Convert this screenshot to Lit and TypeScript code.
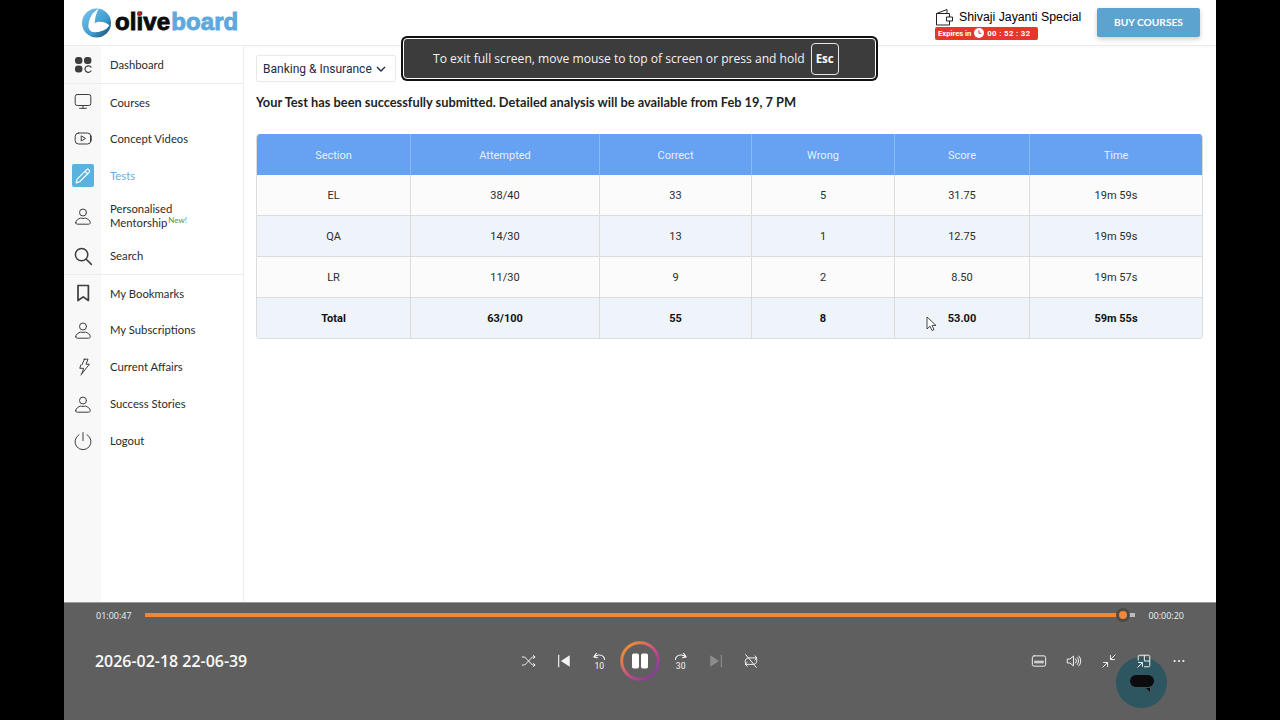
import { LitElement, html, css, svg } from "lit";
import { customElement } from "lit/decorators.js";

const S = (c: unknown, box = "0 0 22 22") =>
  html`<svg viewBox=${box} fill="none" stroke="currentColor" stroke-width="1" stroke-linecap="round" stroke-linejoin="round">${c}</svg>`;

const person = svg`<circle cx="11" cy="7.500" r="3.500"/><path d="M3.700 17.800c0-2.600 2.700-4 5-4.800 1.400.6 3.200.6 4.600 0 2.300.8 5 2.200 5 4.800 0 .9-.9 1.400-1.800 1.400H5.500c-.9 0-1.800-.5-1.800-1.400z"/>`;

const sideIcons: Record<string, unknown> = {
  dash: S(svg`<rect x="3" y="3" width="7.400" height="7" rx="3" fill="currentColor" stroke="none"/><rect x="12" y="3" width="7.400" height="7" rx="3" fill="currentColor" stroke="none"/><rect x="3" y="11.600" width="7.400" height="7" rx="3" fill="currentColor" stroke="none"/><path d="M19 13.200a3.300 3.300 0 1 0 0 3.800" stroke-width="1.200"/>`),
  courses: S(svg`<rect x="3.200" y="3.500" width="15.600" height="11" rx="2"/><path d="M11 14.500v2.600M7.500 17.300h7"/>`),
  video: S(svg`<rect x="3.200" y="5" width="15.600" height="11" rx="3.400"/><path d="M9.200 8.200v4.800l4-2.400z"/><path d="M18.800 8v5" stroke-width="1.600"/>`),
  pen: S(svg`<path d="M4.500 14.500 14.800 4.200c.8-.8 2-.8 2.800 0s.8 2 0 2.800L7.300 17.300l-3.800 1.200zM13.200 5.800l3 3" stroke-width="1.300"/>`),
  person: S(person),
  search: S(svg`<circle cx="9.600" cy="9.600" r="6.200" stroke-width="1.500"/><path d="m14.200 14.200 5.200 5.200" stroke-width="1.500"/>`),
  bookmark: S(svg`<path d="M6 3.500h10.400v15l-5.200-3.600L6 18.500z" stroke-width="1.700"/>`),
  bolt: S(svg`<path d="M11.800 3.200h4.200l-2 5h3.400L10 17.500l1.600-5.200H7.800l1-3.300"/><path d="m12.500 3.200-2.600 5.600M9 19l1-2"/>`),
  power: S(svg`<path d="M7 4.700a8 8 0 1 0 8 0"/><path d="M11 2.600v8"/>`),
};

const rows: [string, string, number][] = [
  ["dash", "Dashboard", 38],
  ["courses", "Courses", 36],
  ["video", "Concept Videos", 37],
  ["pen", "Tests", 37],
  ["person", "Personalised", 43],
  ["search", "Search", 38],
  ["bookmark", "My Bookmarks", 36],
  ["person", "My Subscriptions", 37],
  ["bolt", "Current Affairs", 37],
  ["person", "Success Stories", 37],
  ["power", "Logout", 37],
];

const head = ["Section", "Attempted", "Correct", "Wrong", "Score", "Time"];
const data = [
  ["EL", "38/40", "33", "5", "31.75", "19m 59s"],
  ["QA", "14/30", "13", "1", "12.75", "19m 59s"],
  ["LR", "11/30", "9", "2", "8.50", "19m 57s"],
  ["Total", "63/100", "55", "8", "53.00", "59m 55s"],
];

const P = (c: unknown, w = 16) =>
  html`<svg width=${w} height=${w} viewBox="0 0 18 18" fill="none" stroke="currentColor" stroke-width="1.100" stroke-linecap="round" stroke-linejoin="round">${c}</svg>`;

const ctl = {
  shuffle: P(svg`<path d="M1.500 4.500h2.600l8.800 9h2.600M1.500 13.500h2.600l8.800-9h2.600M14 2.800l1.800 1.700L14 6.200M14 11.800l1.800 1.700-1.800 1.700"/>`),
  prev: P(svg`<path d="M3 2.500v13" stroke-width="1.300"/><path d="M15.500 2.500v13L5.500 9z" fill="currentColor" stroke="none"/>`),
  back: P(svg`<path d="M4.200 5.400C6 2.600 11 2.200 13.400 4.600c.7.700 1 1.600 1.100 2.800M6.400 1.400 3.900 4.900l3.500.9"/><text x="9.300" y="16.800" text-anchor="middle" font-family="Roboto,sans-serif" font-size="8.600" fill="currentColor" stroke="none">10</text>`, 18),
  fwd: P(svg`<path d="M13.800 5.400C12 2.600 7 2.200 4.600 4.600c-.7.700-1 1.600-1.100 2.800M11.600 1.400l2.500 3.500-3.500.9"/><text x="8.700" y="16.800" text-anchor="middle" font-family="Roboto,sans-serif" font-size="8.600" fill="currentColor" stroke="none">30</text>`, 18),
  next: P(svg`<path d="M15 2.500v13" stroke-width="1.300" stroke="#8d8d8d"/><path d="M2.500 2.500v13L12.500 9z" fill="#8d8d8d" stroke="none"/>`),
  repeat: P(svg`<path d="M3.300 12.500a5 5 0 0 1-.8-3c0-2.300 1.700-4 4-4h8.600M13.400 3.200 15.800 5.500l-2.400 2.300M14.800 5.800a5 5 0 0 1 .7 3c0 2.300-1.700 4-4 4H2.800M4.800 15 2.400 12.700l2.400-2.300M3 1.800 15 16.200"/>`),
  caption: P(svg`<rect x="1.500" y="3.200" width="15" height="11.600" rx="2"/><path d="M4 11h10M4 9.200h10" stroke-width="1.200"/>`),
  volume: P(svg`<path d="M1.800 6.800h2.600l4-3.300v11l-4-3.300H1.800zM10.800 6.600a3.400 3.400 0 0 1 0 4.800M12.600 5a5.600 5.600 0 0 1 0 8M14.400 3.400a7.800 7.800 0 0 1 0 11.200"/>`),
  compress: P(svg`<path d="M2 16l5.400-5.400M2.800 10.600h4.600v4.600M16 2l-5.400 5.400M15.200 7.400h-4.600V2.800"/>`),
  pip: P(svg`<path d="M2.500 8V3.800c0-.8.500-1.300 1.300-1.300h10.400c.8 0 1.300.5 1.300 1.300v10.400c0 .8-.5 1.300-1.300 1.300H9.500M9.400 2.800v6.200h6"/><path d="M2 16l5-5M2.800 10.600h4.400V15"/>`),
  more: html`<svg width="18" height="18" viewBox="0 0 18 18" fill="currentColor"><circle cx="4.600" cy="9" r="1.100"/><circle cx="9" cy="9" r="1.100"/><circle cx="13.400" cy="9" r="1.100"/></svg>`,
};

@customElement("app-root")
export class AppRoot extends LitElement {
  static styles = css`
    :host { display: block; width: 1280px; height: 720px; background: #000; overflow: hidden; }
    * { box-sizing: border-box; }
    .stage { position: relative; width: 1152px; height: 720px; margin: 0 auto; background: #fff; display: flex; flex-direction: column; overflow: hidden; font-family: "Lato", sans-serif; color: #222; }

    header { height: 46px; flex: none; display: flex; align-items: center; border-bottom: 1px solid #ececec; box-shadow: 0 1px 2px rgba(0,0,0,.04); padding: 0 0 1px 17px; }
    .logo { display: flex; align-items: center; gap: 3px; position: relative; }
    .logo svg { width: 31px; height: 31px; display: block; }
    .word { font: 700 24px "Liberation Sans", sans-serif; letter-spacing: .1px; -webkit-text-stroke: .9px currentColor; color: #0c0c0c; line-height: 30px; white-space: nowrap; }
    .word b { font-weight: 700; color: #5da9dd; margin-left: 1px; }
    .reddot { position: absolute; left: 56px; top: 5px; width: 4.500px; height: 4.500px; border-radius: 50%; background: #b0202b; }
    .offer { margin-left: auto; margin-top: 3px; width: 146px; display: flex; flex-direction: column; }
    .offer-top { display: flex; align-items: center; gap: 5px; height: 19px; }
    .offer-top svg { width: 19px; height: 19px; display: block; color: #222; flex: none; }
    .offer-name { font: 400 12.300px "Liberation Sans", sans-serif; color: #000; white-space: nowrap; }
    .badge { width: 103px; height: 13px; border-radius: 2px; background: #e5372c; color: #fff; display: flex; align-items: center; padding-left: 3px; font: 700 7.600px "Roboto", sans-serif; white-space: nowrap; }
    .badge svg { width: 10px; height: 10px; margin: 0 3px 0 3px; flex: none; }
    .badge span { font-size: 7.800px; letter-spacing: .35px; }
    .buy { margin: 0 16px; width: 103px; height: 29px; border-radius: 2px; background: #5da3cf; color: #fff; font: 700 10.200px "Lato", sans-serif; display: flex; align-items: center; justify-content: center; box-shadow: 0 2px 5px rgba(0,0,0,.2); }

    .body { flex: 1; display: flex; min-height: 0; }
    nav { width: 180px; flex: none; border-right: 1px solid #efefef; background: linear-gradient(90deg, #f8f8f8 37px, #fff 37px); }
    .item { display: flex; align-items: center; font-size: 11.300px; color: #2b2b2b; }
    .item.line { border-bottom: 1px solid #ececec; }
    .ic { width: 37px; height: 23px; flex: none; display: flex; align-items: center; justify-content: center; color: #3d3d3d; margin-right: 9px; }
    .ic svg { width: 22px; height: 22px; display: block; }
    .item.active { color: #62b0d8; }
    .item.active .ic { color: #fff; }
    .pill { width: 22px; height: 23px; margin-left: 1px; border-radius: 2px; background: #5cb2de; display: flex; align-items: center; justify-content: center; }
    .pill svg { width: 20px; height: 20px; }
    .two { line-height: 14px; }
    sup { font-size: 8px; color: #4c9a4c; line-height: 0; vertical-align: 4px; margin-left: 1px; }

    main { flex: 1; padding: 9px 13px 0 12px; min-width: 0; }
    .select { width: 140px; height: 27px; border: 1px solid #e9e9e9; border-radius: 2px; display: flex; align-items: center; padding-left: 6px; gap: 3px; font: 400 12px "Roboto", sans-serif; color: #1c2a4a; }
    .select svg { width: 12px; height: 12px; }
    .msg { margin: 12px 0 23px; font: 700 12.800px/17px "Lato", sans-serif; color: #1f1f1f; white-space: nowrap; }
    .table { display: grid; grid-template-columns: 154px 189px 152px 143px 135px 1fr; border: 1px solid #dcdcdc; border-top: 0; border-radius: 4px; overflow: hidden; font: 400 11px "Roboto", sans-serif; color: #2c2c2c; }
    .cell { height: 41px; display: flex; align-items: center; justify-content: center; border-right: 1px solid #dcdcdc; border-bottom: 1px solid #dcdcdc; background: #fbfbfc; }
    .cell.th { background: #66a1f2; color: #e6f0fd; border-right-color: #8ab8f5; border-bottom: 0; padding-top: 1px; }
    .cell.alt { background: #eff3fa; }
    .cell.bold { font-weight: 700; color: #111; border-bottom: 0; height: 40px; }
    .cell.end { border-right: 0; }

    .toast { position: absolute; left: 337px; top: 36px; width: 477px; height: 45px; background: #111; border-radius: 6px; padding: 2px; }
    .toast-in { height: 100%; border: 1px solid #fff; border-radius: 4px; background: #3c3c3c; display: flex; align-items: center; padding-left: 29px; gap: 6px; color: #f2f2f2; font: 400 12.080px "Open Sans", sans-serif; white-space: nowrap; }
    .esc { width: 28px; height: 32px; border: 1px solid #e8e8e8; border-radius: 4px; display: flex; align-items: center; justify-content: center; font-weight: 700; font-size: 11.500px; color: #fff; }

    .cursor { position: absolute; left: 862px; top: 316px; width: 11px; height: 16px; }

    .player { position: absolute; left: 0; right: 0; bottom: 0; height: 118px; background: #5f5f5f; border-top: 1px solid #9a9a9a; color: #fff; }
    .time-row { height: 24px; display: flex; align-items: center; padding: 0 32px; font: 400 9px "Open Sans", sans-serif; color: #f0f0f0; }
    .time-row span { width: 49px; flex: none; }
    .time-row span.r { width: auto; }
    .track { flex: 1; height: 4px; background: #bdbdbd; position: relative; margin: -1px 13px 0 0; }
    .fill { height: 100%; background: #f5852f; }
    .thumb { position: absolute; top: 50%; width: 14px; height: 14px; margin: -7px 0 0 -7px; border-radius: 50%; background: #f5873a; border: 3.500px solid #4a4a4a; }
    .controls { position: relative; z-index: 1; display: grid; grid-template-columns: 1fr auto 1fr; align-items: center; height: 40px; margin-top: 14px; padding: 0 20px; }
    .title { font: 600 15.950px "Open Sans", sans-serif; color: #fafafa; white-space: nowrap; margin: -1px 0 0 11px; }
    .center, .right { display: flex; align-items: center; }
    .right { justify-content: flex-end; }
    .btn { width: 35px; height: 40px; display: flex; align-items: center; justify-content: center; color: #f3f3f3; }
    .play { width: 47px; height: 40px; display: flex; align-items: center; justify-content: center; }
    .play svg { width: 40px; height: 40px; }

    .chat { position: absolute; left: 1052px; top: 54px; width: 51px; height: 51px; border-radius: 50%; background: #2d5660; display: flex; align-items: center; justify-content: center; }
    .chat-pill { width: 24px; height: 12px; margin-bottom: 3px; border-radius: 6px; background: #0c0c0e; position: relative; }
    .chat-tail { position: absolute; right: 4px; bottom: -5px; border-left: 4px solid transparent; border-top: 4px solid #0c0c0e; }
  `;

  private item(r: [string, string, number], i: number) {
    const [k, label, h] = r;
    const active = k === "pen";
    return html`<div class="item ${i === 0 || i === 5 ? "line" : ""} ${active ? "active" : ""}" style="height:${h}px">
      <div class="ic">${active ? html`<div class="pill">${sideIcons[k]}</div>` : sideIcons[k]}</div>
      ${label === "Personalised"
        ? html`<div class="two">Personalised<br />Mentorship<sup>New!</sup></div>`
        : html`<div>${label}</div>`}
    </div>`;
  }

  render() {
    return html`<div class="stage">
      <header>
        <div class="logo">
          <svg viewBox="0 0 32 32">
            <defs>
              <linearGradient id="lg" x1="0" y1="0" x2="1" y2="1"><stop offset="0" stop-color="#7cc6ea"/><stop offset=".6" stop-color="#3f9bd0"/><stop offset="1" stop-color="#14405f"/></linearGradient>
            </defs>
            <circle cx="16" cy="16.500" r="15" fill="url(#lg)"/>
            <path d="M18.500 1.500C11.500 5 8 12 7.600 19.500c-.2 4 3 6.500 7 6.300 4-.2 11-1 14.400-6.500.6-1-1-1.200-2-2-2.400-1.800-6-2.500-9-1.400-2.400.9-3.500 3-3.800 4.800C14 14 15 7 18.500 1.500z" fill="#fff"/>
            <path d="M10 24c2-7 6-9 10-8.600 3 .3 5.500 1.400 8 3.200-2 4.200-8 7.200-13.500 7.400-2 .1-3.500-.6-4.500-2z" fill="#fff"/>
          </svg>
          <div class="word">olive<b>board</b></div>
          <i class="reddot"></i>
        </div>
        <div class="offer">
          <div class="offer-top">
            <svg viewBox="0 0 19 19" fill="none" stroke="currentColor" stroke-width="1"><path d="M1.500 5.500v11.500h13V13M1.500 5.500 12 1.500v4M1.500 5.500h13V9"/><path d="M11.500 9h6v4h-6z"/></svg>
            <div class="offer-name">Shivaji Jayanti Special</div>
          </div>
          <div class="badge">Expires in
            <svg viewBox="0 0 10 10"><circle cx="5" cy="5" r="5" fill="#fff"/><path d="M5 2.200V5.300h2.400" fill="none" stroke="#e5372c" stroke-width="1"/></svg>
            <span>00 : 52 : 32</span></div>
        </div>
        <div class="buy">BUY COURSES</div>
      </header>
      <div class="body">
        <nav>${rows.map((r, i) => this.item(r, i))}</nav>
        <main>
          <div class="select">Banking &amp; Insurance
            <svg viewBox="0 0 12 12" fill="none" stroke="#1c2a4a" stroke-width="1.400"><path d="m2 4 4 4 4-4"/></svg>
          </div>
          <div class="msg">Your Test has been successfully submitted. Detailed analysis will be available from Feb 19, 7 PM</div>
          <div class="table">
            ${head.map((h, c) => html`<div class="cell th ${c === 5 ? "end" : ""}">${h}</div>`)}
            ${data.map((row, r) =>
              row.map((v, c) => html`<div class="cell ${r % 2 ? "alt" : ""} ${r === 3 ? "bold" : ""} ${c === 5 ? "end" : ""}">${v}</div>`)
            )}
          </div>
        </main>
      </div>

      <div class="toast"><div class="toast-in">To exit full screen, move mouse to top of screen or press and hold <div class="esc">Esc</div></div></div>

      <svg class="cursor" viewBox="0 0 11 16"><path d="M1 1v12l3-2.800 2 4.300 2-.9-2-4.200h4z" fill="#fff" stroke="#333" stroke-width=".9"/></svg>

      <div class="player">
        <div class="chat"><div class="chat-pill"><i class="chat-tail"></i></div></div>
        <div class="time-row">
          <span>01:00:47</span>
          <div class="track"><div class="fill" style="width:98.7%"></div><div class="thumb" style="left:98.7%"></div></div>
          <span class="r">00:00:20</span>
        </div>
        <div class="controls">
          <div class="title">2026-02-18 22-06-39</div>
          <div class="center">
            <div class="btn">${ctl.shuffle}</div>
            <div class="btn">${ctl.prev}</div>
            <div class="btn">${ctl.back}</div>
            <div class="play">
              <svg viewBox="0 0 40 40">
                <defs><linearGradient id="ring" x1="0" y1="0" x2="1" y2="1"><stop offset=".15" stop-color="#f0883a"/><stop offset=".6" stop-color="#c0468f"/><stop offset="1" stop-color="#6a3a9a"/></linearGradient></defs>
                <circle cx="20" cy="20" r="18.300" fill="none" stroke="url(#ring)" stroke-width="3"/>
                <rect x="12" y="12.500" width="7" height="15" rx="1.800" fill="#fff"/>
                <rect x="21" y="12.500" width="7" height="15" rx="1.800" fill="#fff"/>
              </svg>
            </div>
            <div class="btn">${ctl.fwd}</div>
            <div class="btn">${ctl.next}</div>
            <div class="btn">${ctl.repeat}</div>
          </div>
          <div class="right">
            <div class="btn">${ctl.caption}</div>
            <div class="btn">${ctl.volume}</div>
            <div class="btn">${ctl.compress}</div>
            <div class="btn">${ctl.pip}</div>
            <div class="btn">${ctl.more}</div>
          </div>
        </div>
      </div>
    </div>`;
  }
}
